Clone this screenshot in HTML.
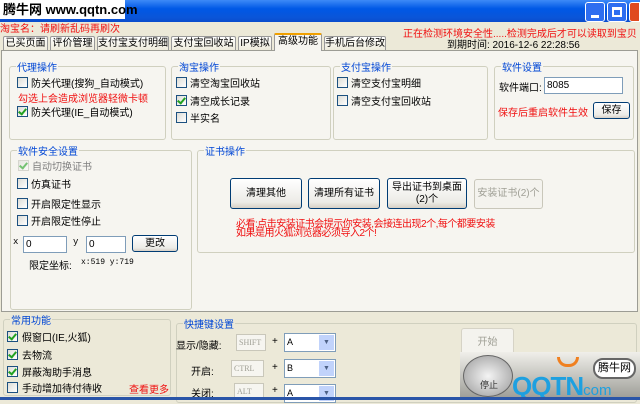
<!DOCTYPE html>
<html><head><meta charset="utf-8"><style>
*{margin:0;padding:0;box-sizing:border-box}
body{width:640px;height:400px;overflow:hidden;background:#ece9d8;font-family:"Liberation Sans","Noto Sans CJK SC","WenQuanYi Zen Hei",sans-serif;font-size:10px;color:#000;position:relative}
.a{position:absolute;white-space:nowrap}
.title{left:0;top:0;width:640px;height:22px;background:linear-gradient(#3d8af7,#0058e6 40%,#0a55d8 80%,#0a4ccc)}
.wm{left:0;top:0;width:125px;height:19px;background:#fff;font-weight:bold;font-size:13px;line-height:19px;padding-left:3px;color:#000}
.red{color:#f01010}
.tab{position:absolute;top:36px;height:15px;border:1px solid #999;border-bottom:none;background:linear-gradient(#fff,#ece9d8);font-size:10px;line-height:14px;text-align:center;border-radius:2px 2px 0 0}
.panel{left:1px;top:50px;width:637px;height:262px;background:#f6f5f0;border:1px solid #9c9c94}
.g{position:absolute;border:1px solid #d0d0bf;border-radius:3px}
.g>b{position:absolute;top:-8px;left:6px;background:#f6f5f0;color:#0046d5;font-weight:normal;padding:0 1px;font-size:10px}
.cb{position:absolute;width:11px;height:11px;border:1px solid #1c5180;background:linear-gradient(135deg,#dcdcd6,#fff)}
.cb.c::after{content:"";position:absolute;left:2px;top:0px;width:3px;height:6px;border:solid #21a121;border-width:0 2px 2px 0;transform:rotate(40deg)}
.btn{position:absolute;border:1px solid #003c74;border-radius:3px;background:linear-gradient(#fff,#ecebe6 80%,#d6d0c5);text-align:center;font-size:10px}
.inp{position:absolute;background:#fff;border:1px solid #7f9db9;font-size:10px;padding-left:2px}
.dis{color:#a0a096}
</style></head><body>
<div class="a title"></div>
<div class="a" style="left:266px;top:2px;width:20px;height:20px;background:#2e6ef0;border:1px solid #fff;border-radius:3px;left:585px"><div style="position:absolute;left:5px;top:12px;width:8px;height:3px;background:#fff"></div></div>
<div class="a" style="left:607px;top:2px;width:20px;height:20px;background:#2e6ef0;border:1px solid #fff;border-radius:3px"><div style="position:absolute;left:4px;top:4px;width:10px;height:10px;border:2px solid #fff;border-top-width:3px"></div></div>
<div class="a" style="left:629px;top:2px;width:11px;height:20px;background:#e04a1e;border:1px solid #fff;border-radius:3px 0 0 3px"></div>
<div class="a wm">腾牛网 www.qqtn.com</div>
<div class="a red" style="left:0;top:20px;font-size:10px">淘宝名：请刷新乱码再刷次</div>
<div class="a red" style="left:403px;top:25px">正在检测环境安全性.....检测完成后才可以读取到宝贝</div>
<div class="a" style="left:447px;top:36px">到期时间: 2016-12-6 22:28:56</div>
<div class="tab" style="left:3px;width:45px">已买页面</div>
<div class="tab" style="left:50px;width:45px">评价管理</div>
<div class="tab" style="left:97px;width:72px">支付宝支付明细</div>
<div class="tab" style="left:171px;width:65px">支付宝回收站</div>
<div class="tab" style="left:238px;width:34px">IP模拟</div>
<div class="tab" style="left:274px;width:48px;top:33px;height:18px;background:#f6f5f0;border-top:2px solid #f0a000;z-index:2">高级功能</div>
<div class="tab" style="left:324px;width:62px">手机后台修改</div>
<div class="a panel"></div>

<div class="g" style="left:9px;top:66px;width:157px;height:74px"><b>代理操作</b></div>
<div class="cb" style="left:17px;top:77px"></div><div class="a" style="left:31px;top:75px">防关代理(搜狗_自动模式)</div>
<div class="a red" style="left:18px;top:90px">勾选上会造成浏览器轻微卡顿</div>
<div class="cb c" style="left:17px;top:106px"></div><div class="a" style="left:31px;top:104px">防关代理(IE_自动模式)</div>

<div class="g" style="left:171px;top:66px;width:160px;height:74px"><b>淘宝操作</b></div>
<div class="cb" style="left:176px;top:77px"></div><div class="a" style="left:190px;top:75px">清空淘宝回收站</div>
<div class="cb c" style="left:176px;top:95px"></div><div class="a" style="left:190px;top:93px">清空成长记录</div>
<div class="cb" style="left:176px;top:112px"></div><div class="a" style="left:190px;top:110px">半实名</div>

<div class="g" style="left:333px;top:66px;width:155px;height:74px"><b>支付宝操作</b></div>
<div class="cb" style="left:337px;top:77px"></div><div class="a" style="left:351px;top:75px">清空支付宝明细</div>
<div class="cb" style="left:337px;top:95px"></div><div class="a" style="left:351px;top:93px">清空支付宝回收站</div>

<div class="g" style="left:494px;top:66px;width:140px;height:74px"><b>软件设置</b></div>
<div class="a" style="left:499px;top:79px">软件端口:</div>
<div class="inp" style="left:544px;top:77px;width:79px;height:17px;line-height:15px">8085</div>
<div class="a red" style="left:498px;top:104px">保存后重启软件生效</div>
<div class="btn" style="left:593px;top:102px;width:37px;height:17px;line-height:15px">保存</div>

<div class="g" style="left:10px;top:150px;width:182px;height:160px"><b>软件安全设置</b></div>
<div class="cb c" style="left:18px;top:160px;border-color:#c0c0b8;opacity:.6"></div><div class="a dis" style="left:32px;top:158px;color:#808080">自动切换证书</div>
<div class="cb" style="left:17px;top:178px"></div><div class="a" style="left:31px;top:176px">仿真证书</div>
<div class="cb" style="left:17px;top:198px"></div><div class="a" style="left:31px;top:196px">开启限定性显示</div>
<div class="cb" style="left:17px;top:215px"></div><div class="a" style="left:31px;top:213px">开启限定性停止</div>
<div class="a" style="left:13px;top:237px;font-family:'Liberation Mono',monospace;font-size:9px">x</div>
<div class="inp" style="left:23px;top:236px;width:44px;height:17px;line-height:15px">0</div>
<div class="a" style="left:73px;top:237px;font-family:'Liberation Mono',monospace;font-size:9px">y</div>
<div class="inp" style="left:86px;top:236px;width:40px;height:17px;line-height:15px">0</div>
<div class="btn" style="left:132px;top:235px;width:46px;height:17px;line-height:15px">更改</div>
<div class="a" style="left:29px;top:257px">限定坐标:</div>
<div class="a" style="left:81px;top:258px;font-family:'Liberation Mono',monospace;font-size:8px">x:519 y:719</div>

<div class="g" style="left:197px;top:150px;width:438px;height:103px"><b>证书操作</b></div>
<div class="btn" style="left:230px;top:178px;width:72px;height:31px;line-height:29px">清理其他</div>
<div class="btn" style="left:308px;top:178px;width:72px;height:31px;line-height:29px">清理所有证书</div>
<div class="btn" style="left:387px;top:178px;width:80px;height:31px;line-height:12px;padding-top:3px">导出证书到桌面<br>(2)个</div>
<div class="btn" style="left:474px;top:179px;width:69px;height:30px;line-height:28px;border-color:#c9c7ba;background:#f4f3ee;color:#a0a096">安装证书(2)个</div>
<div class="a red" style="left:236px;top:220px;line-height:9px;font-size:10px;letter-spacing:-0.5px">必看:点击安装证书会提示你安装,会接连出现2个,每个都要安装<br>如果是用火狐浏览器必须导入2个!</div>

<div class="g" style="left:3px;top:319px;width:168px;height:77px;border-color:#d0d0bf"><b style="background:#ece9d8">常用功能</b></div>
<div class="cb c" style="left:7px;top:331px"></div><div class="a" style="left:22px;top:329px">假窗口(IE,火狐)</div>
<div class="cb c" style="left:7px;top:349px"></div><div class="a" style="left:22px;top:347px">去物流</div>
<div class="cb c" style="left:7px;top:366px"></div><div class="a" style="left:22px;top:364px">屏蔽淘助手消息</div>
<div class="cb" style="left:7px;top:382px"></div><div class="a" style="left:22px;top:380px">手动增加待付待收</div>
<div class="a red" style="left:129px;top:381px">查看更多</div>

<div class="g" style="left:176px;top:323px;width:461px;height:80px;border-color:#d0d0bf"><b style="background:#ece9d8">快捷键设置</b></div>
<div class="a" style="left:176px;top:337px">显示/隐藏:</div>
<div class="inp" style="left:236px;top:334px;width:30px;height:17px;color:#a0a096;font-size:8px;line-height:15px;font-family:'Liberation Serif',serif;border-color:#c9c7ba;background:#f6f5f0">SHIFT</div>
<div class="a" style="left:272px;top:336px">+</div>
<div class="inp" style="left:284px;top:333px;width:52px;height:19px;line-height:17px;font-size:9px">A<span style="position:absolute;right:1px;top:1px;width:15px;height:15px;background:#c1d3fb;color:#4d6185;font-size:7px;line-height:15px;text-align:center">▼</span></div>
<div class="a" style="left:191px;top:363px">开启:</div>
<div class="inp" style="left:231px;top:360px;width:33px;height:17px;color:#a0a096;font-size:8px;line-height:15px;font-family:'Liberation Serif',serif;border-color:#c9c7ba;background:#f6f5f0">CTRL</div>
<div class="a" style="left:272px;top:362px">+</div>
<div class="inp" style="left:284px;top:359px;width:52px;height:19px;line-height:17px;font-size:9px">B<span style="position:absolute;right:1px;top:1px;width:15px;height:15px;background:#c1d3fb;color:#4d6185;font-size:7px;line-height:15px;text-align:center">▼</span></div>
<div class="a" style="left:191px;top:385px">关闭:</div>
<div class="inp" style="left:234px;top:383px;width:30px;height:17px;color:#a0a096;font-size:8px;line-height:15px;font-family:'Liberation Serif',serif;border-color:#c9c7ba;background:#f6f5f0">ALT</div>
<div class="a" style="left:272px;top:385px">+</div>
<div class="inp" style="left:284px;top:384px;width:52px;height:19px;line-height:17px;font-size:9px">A<span style="position:absolute;right:1px;top:1px;width:15px;height:15px;background:#c1d3fb;color:#4d6185;font-size:7px;line-height:15px;text-align:center">▼</span></div>
<div class="btn" style="left:461px;top:328px;width:53px;height:29px;line-height:27px;border-color:#d6d3c6;background:#f4f3ee;color:#a0a096">开始</div>

<div class="a" style="left:460px;top:352px;width:180px;height:48px;background:linear-gradient(#f0efea,#9a9a94)"></div>
<div class="a" style="left:463px;top:355px;width:50px;height:42px;border-radius:50%;background:radial-gradient(#f4f4f4,#999);border:1px solid #666"></div>
<div class="a" style="left:480px;top:378px;font-size:9px;color:#333">停止</div>
<div class="a" style="left:512px;top:373px;font-size:26px;font-weight:bold;color:#1ea0e0;letter-spacing:-1px;line-height:26px">QQTN<span style="font-size:15px;font-weight:normal;letter-spacing:0">com</span></div>
<div class="a" style="left:557px;top:357px;width:22px;height:10px;border:3px solid #f08020;border-top:none;border-radius:0 0 10px 10px"></div>
<div class="a" style="left:593px;top:358px;width:43px;height:21px;border:2px solid #666;border-radius:10px;background:#fff;font-size:11px;line-height:17px;text-align:center">腾牛网</div>
<div class="a" style="left:0;top:397px;width:640px;height:3px;background:#2a55a8"></div>
</body></html>
